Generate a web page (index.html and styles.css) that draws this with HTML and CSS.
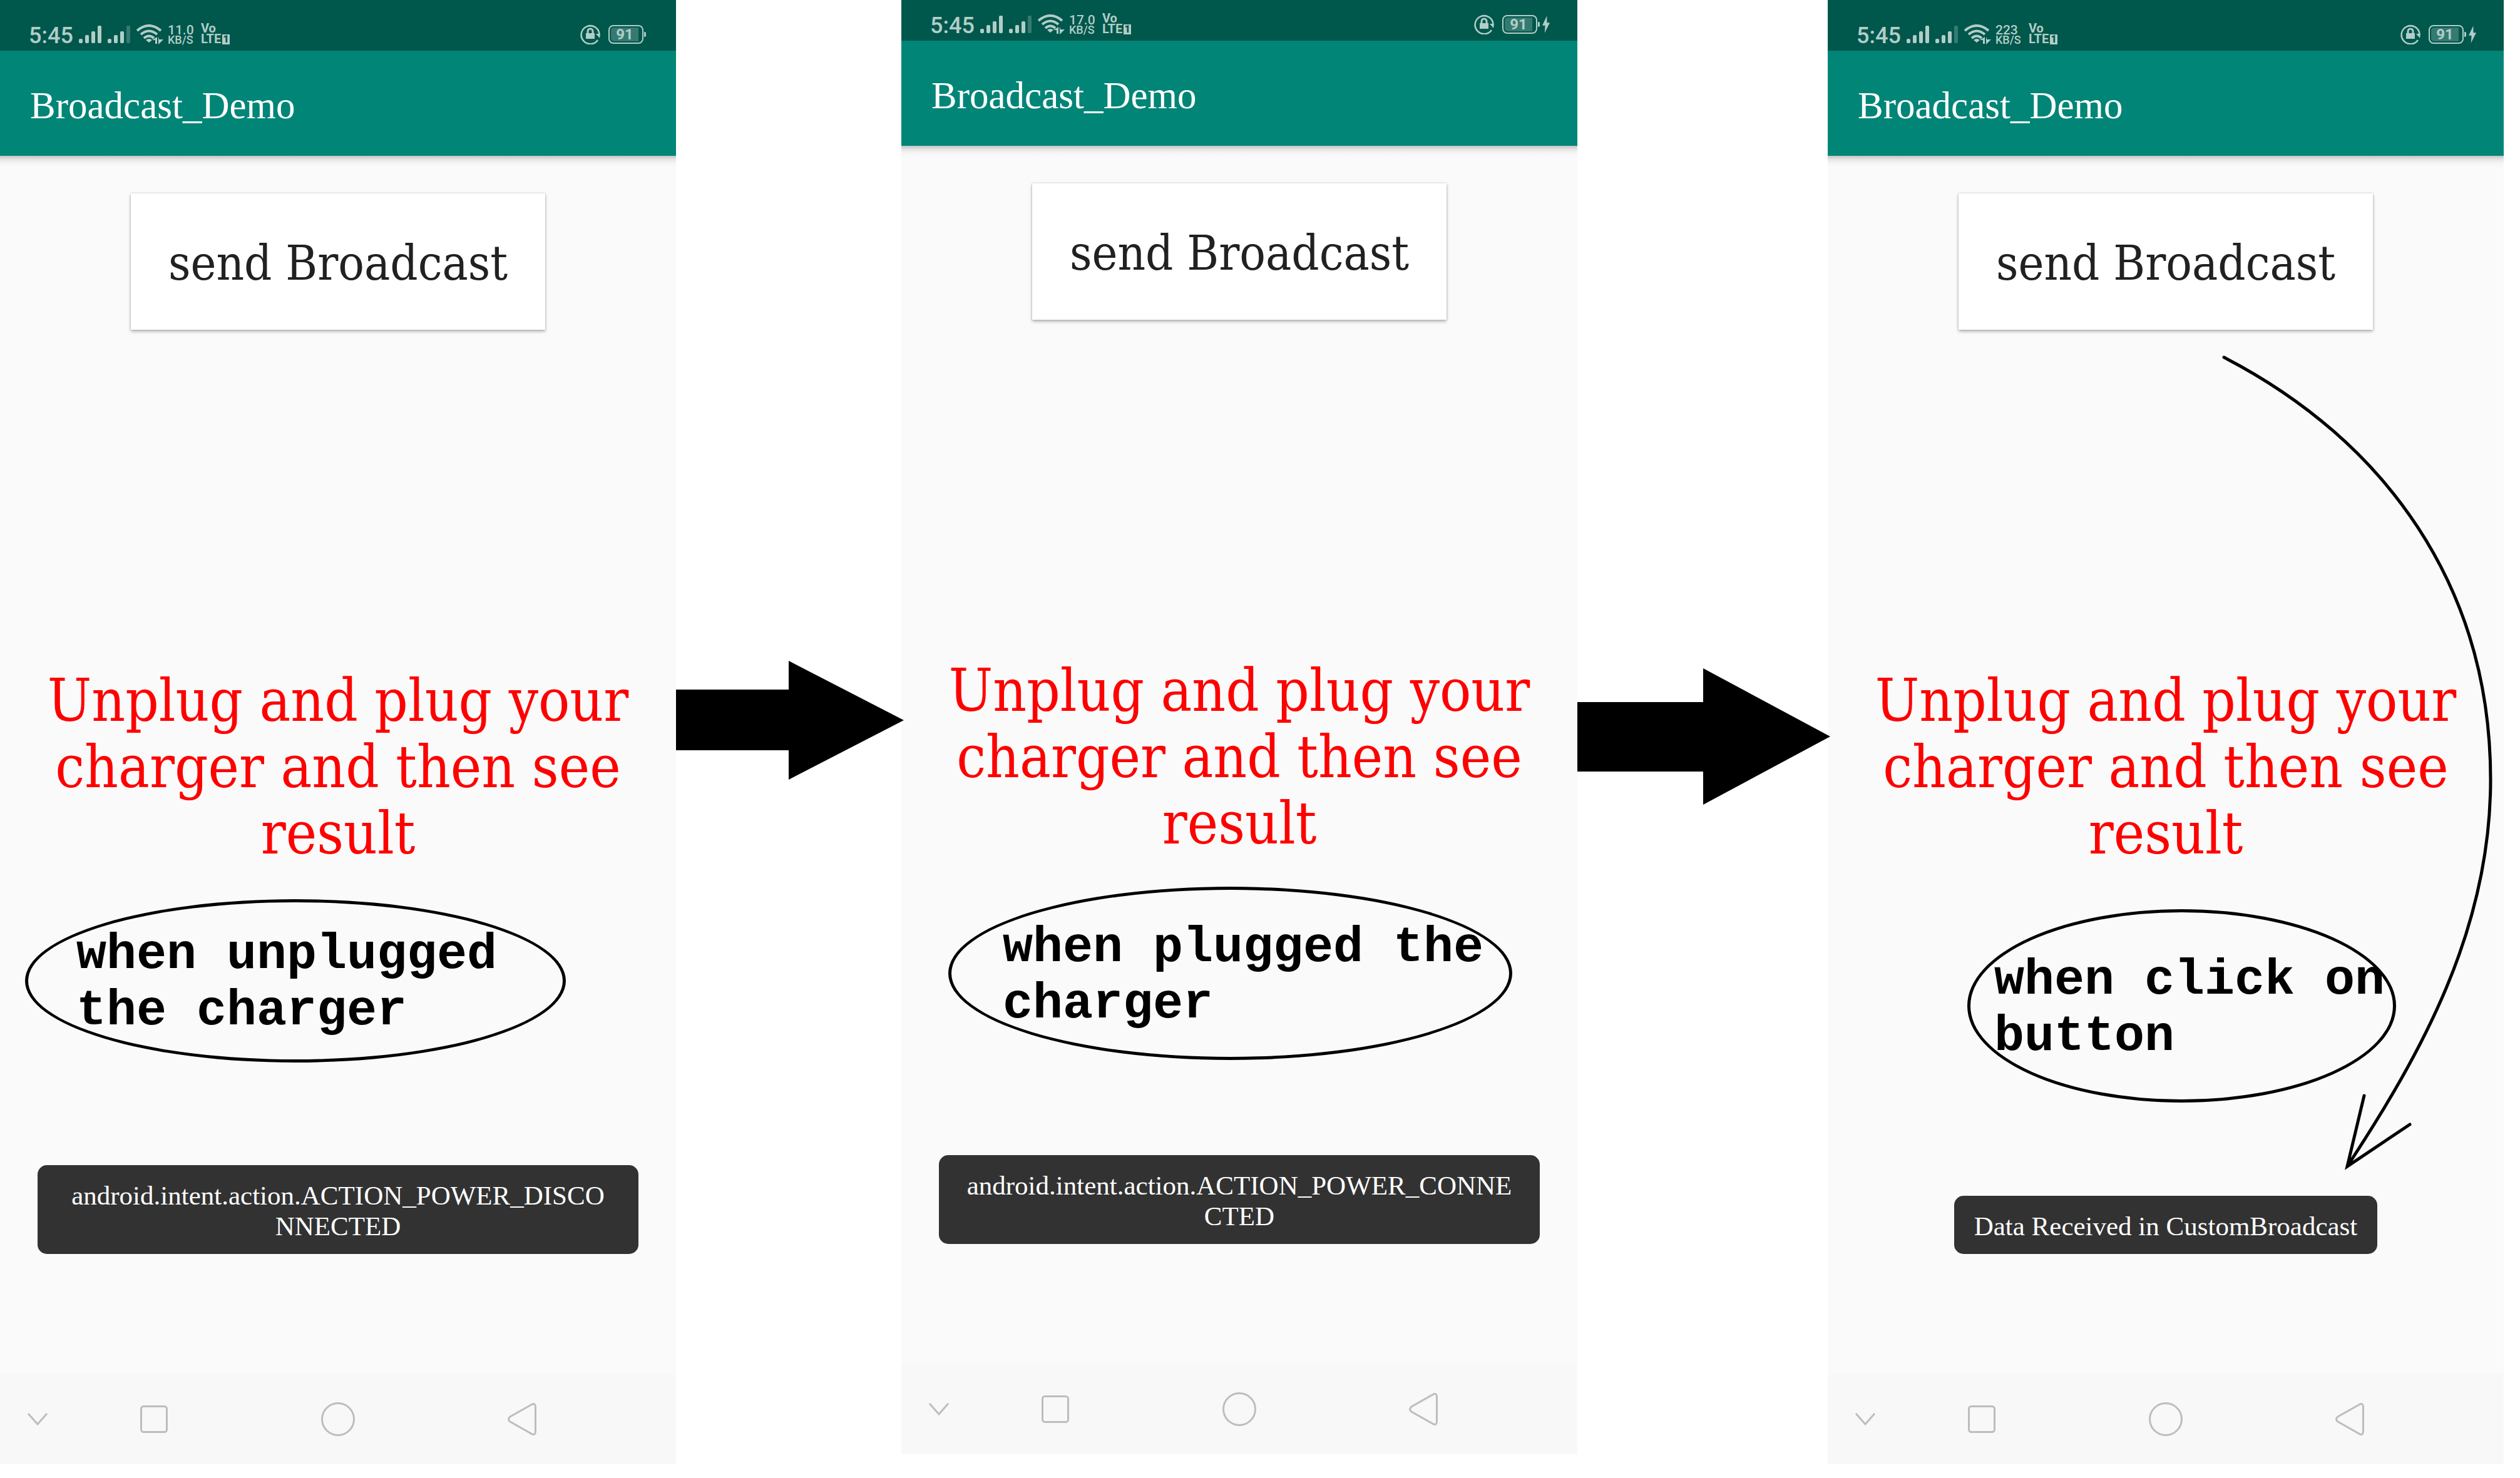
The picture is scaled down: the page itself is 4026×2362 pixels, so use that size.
FILE: index.html
```
<!DOCTYPE html>
<html lang="en">
<head>
<meta charset="utf-8">
<title>Broadcast_Demo</title>
<link rel="stylesheet" href="styles.css">
</head>
<body>
<svg class="sprite" aria-hidden="true">
  <symbol id="signal-full" viewBox="0 0 36 28"><rect y="21" width="6" height="7" rx="2"/><rect x="10" y="15" width="6" height="13" rx="2"/><rect x="20" y="9" width="6" height="19" rx="2"/><rect x="30" width="6" height="28" rx="2"/></symbol>
  <symbol id="signal-low" viewBox="0 0 36 28"><rect y="21" width="6" height="7" rx="2"/><rect x="10" y="15" width="6" height="13" rx="2"/><rect x="20" y="9" width="6" height="19" rx="2"/><rect x="30" width="6" height="28" rx="2" opacity=".3"/></symbol>
  <symbol id="wifi" viewBox="0 0 44 32"><g fill="none" stroke="currentColor" stroke-width="4"><path d="M1 10Q20-6 39 10"/><path d="M7 16Q20 5 33 16"/><path d="M12 22Q20 15 28 22"/></g><path d="M20 29l-5-4q5-4 10 0z"/><path d="M33 20v11h-3v-6h-5zM35 32V21h1v3h7z"/></symbol>
  <symbol id="rotate-lock" viewBox="0 0 32 32"><path d="M28 25A14.500 14.500 0 1 1 30.500 15" fill="none" stroke="currentColor" stroke-width="2.500"/><path d="M25 15h7l-1 7z"/><rect x="9" y="14" width="14" height="9"/><path d="M12 14v-3a4 4 0 0 1 8 0v3" fill="none" stroke="currentColor" stroke-width="3"/></symbol>
  <symbol id="bolt" viewBox="0 0 13 30"><path d="M8 0L0 17h5L4 30l9-18H8z"/></symbol>
  <symbol id="nav-down" viewBox="0 0 34 22"><path d="M2 2l15 17L32 2" fill="none" stroke="currentColor" stroke-width="3"/></symbol>
  <symbol id="nav-recent" viewBox="0 0 44 44"><rect x="1.500" y="1.500" width="41" height="41" rx="4" fill="none" stroke="currentColor" stroke-width="3"/></symbol>
  <symbol id="nav-home" viewBox="0 0 54 54"><circle cx="27" cy="27" r="25.500" fill="none" stroke="currentColor" stroke-width="3"/></symbol>
  <symbol id="nav-back" viewBox="0 0 46 52"><path d="M39 2.200L4 22Q-1 26 4 30L39 49.800Q44 52 44.500 46V6Q44 0 39 2.200z" fill="none" stroke="currentColor" stroke-width="3"/></symbol>
</svg>
<main class="flow">
  <section class="phone">
    <header class="status">
      <span class="clock">5:45</span>
      <svg class="signal"><use href="#signal-full"/></svg>
      <svg class="signal"><use href="#signal-low"/></svg>
      <svg class="wifi"><use href="#wifi"/></svg>
      <span class="rate"><span class="rate-num">11.0</span><span class="rate-unit">KB/S</span></span>
      <span class="volte"><span>Vo</span><span class="lte">LTE<b class="sim">1</b></span></span>
      <svg class="lock"><use href="#rotate-lock"/></svg>
      <span class="battery"><span class="level">91</span></span>
    </header>
    <h1 class="appbar">Broadcast_Demo</h1>
    <div class="content">
      <button class="send" type="button">send Broadcast</button>
      <p class="prompt">Unplug and plug your<br>charger and then see<br>result</p>
      <p class="toast">android.intent.action.ACTION_POWER_DISCO<br>NNECTED</p>
    </div>
    <nav class="navbar">
      <button class="nav" type="button" aria-label="Hide"><svg class="i-down"><use href="#nav-down"/></svg></button>
      <button class="nav" type="button" aria-label="Recent"><svg class="i-recent"><use href="#nav-recent"/></svg></button>
      <button class="nav" type="button" aria-label="Home"><svg class="i-home"><use href="#nav-home"/></svg></button>
      <button class="nav" type="button" aria-label="Back"><svg class="i-back"><use href="#nav-back"/></svg></button>
    </nav>
    <p class="note note-unplugged">when unplugged<br>the charger</p>
  </section>

  <svg class="step step-one" viewBox="0 0 360 190"><path d="M0 46H180V0L364 95L180 190V143H0z"/></svg>

  <section class="phone phone-short">
    <header class="status">
      <span class="clock">5:45</span>
      <svg class="signal"><use href="#signal-full"/></svg>
      <svg class="signal"><use href="#signal-low"/></svg>
      <svg class="wifi"><use href="#wifi"/></svg>
      <span class="rate"><span class="rate-num">17.0</span><span class="rate-unit">KB/S</span></span>
      <span class="volte"><span>Vo</span><span class="lte">LTE<b class="sim">1</b></span></span>
      <svg class="lock"><use href="#rotate-lock"/></svg>
      <span class="battery"><span class="level">91</span></span>
      <svg class="bolt"><use href="#bolt"/></svg>
    </header>
    <h1 class="appbar">Broadcast_Demo</h1>
    <div class="content">
      <button class="send" type="button">send Broadcast</button>
      <p class="prompt">Unplug and plug your<br>charger and then see<br>result</p>
      <p class="toast">android.intent.action.ACTION_POWER_CONNE<br>CTED</p>
    </div>
    <nav class="navbar">
      <button class="nav" type="button" aria-label="Hide"><svg class="i-down"><use href="#nav-down"/></svg></button>
      <button class="nav" type="button" aria-label="Recent"><svg class="i-recent"><use href="#nav-recent"/></svg></button>
      <button class="nav" type="button" aria-label="Home"><svg class="i-home"><use href="#nav-home"/></svg></button>
      <button class="nav" type="button" aria-label="Back"><svg class="i-back"><use href="#nav-back"/></svg></button>
    </nav>
    <p class="note note-plugged">when plugged the<br>charger</p>
  </section>

  <svg class="step step-two" viewBox="0 0 400 218"><path d="M0 54H201V0L404 109L201 218V165H0z"/></svg>

  <section class="phone">
    <header class="status">
      <span class="clock">5:45</span>
      <svg class="signal"><use href="#signal-full"/></svg>
      <svg class="signal"><use href="#signal-low"/></svg>
      <svg class="wifi"><use href="#wifi"/></svg>
      <span class="rate"><span class="rate-num">223</span><span class="rate-unit">KB/S</span></span>
      <span class="volte"><span>Vo</span><span class="lte">LTE<b class="sim">1</b></span></span>
      <svg class="lock"><use href="#rotate-lock"/></svg>
      <span class="battery"><span class="level">91</span></span>
      <svg class="bolt"><use href="#bolt"/></svg>
    </header>
    <h1 class="appbar">Broadcast_Demo</h1>
    <div class="content">
      <button class="send" type="button">send Broadcast</button>
      <p class="prompt">Unplug and plug your<br>charger and then see<br>result</p>
      <p class="toast">Data Received in CustomBroadcast</p>
    </div>
    <nav class="navbar">
      <button class="nav" type="button" aria-label="Hide"><svg class="i-down"><use href="#nav-down"/></svg></button>
      <button class="nav" type="button" aria-label="Recent"><svg class="i-recent"><use href="#nav-recent"/></svg></button>
      <button class="nav" type="button" aria-label="Home"><svg class="i-home"><use href="#nav-home"/></svg></button>
      <button class="nav" type="button" aria-label="Back"><svg class="i-back"><use href="#nav-back"/></svg></button>
    </nav>
    <p class="note note-click">when click on<br>button</p>
    <svg class="curve" viewBox="0 0 1080 2340"><path d="M633 571C890 704 1059 936 1059 1246C1059 1486 948 1684 830 1864M857 1751L830 1864L930 1797"/></svg>
  </section>
</main>
</body>
</html>
```
FILE: styles.css
```
* { box-sizing: border-box; }
body { margin: 0; background: #fff; }
h1, p { margin: 0; font-weight: 400; }
button { border: 0; padding: 0; margin: 0; }
svg { fill: currentColor; display: block; flex: none; }
.sprite { position: absolute; width: 0; height: 0; }

.flow {
  display: grid;
  grid-template-columns: 1080fr 360fr 1080fr 400fr 1080fr;
  align-items: start;
  padding-right: 26px;
}
.phone { position: relative; min-width: 0; background: #fafafa; }

.status {
  display: flex;
  align-items: flex-end;
  height: 81px;
  padding: 0 52px 10px 46px;
  background: #00574b;
  color: #b2cdc9;
  font-family: Roboto, sans-serif;
}
.phone-short .status { height: 65px; }
.clock { width: 80px; font-size: 36px; line-height: 28px; font-weight: 500; }
.signal { width: 36px; height: 28px; margin: 0 10px 2px 0; }
.wifi { width: 44px; height: 32px; margin-right: 6px; }
.rate { width: 53px; display: flex; flex-direction: column; font-weight: 500; }
.rate-num { font-size: 21px; line-height: 17px; }
.rate-unit { font-size: 18px; line-height: 14px; }
.volte { display: flex; flex-direction: column; font-size: 20px; line-height: 17px; font-weight: 700; }
.lte { display: flex; align-items: center; gap: 2px; }
.sim { width: 12px; height: 16px; background: #b2cdc9; color: #00574b; font-size: 16px; line-height: 16px; text-align: center; }
.lock { width: 32px; height: 32px; margin: 0 13px 0 auto; }
.battery {
  position: relative;
  width: 56px;
  height: 30px;
  margin-bottom: 1px;
  padding: 2px;
  border: 2px solid #b2cdc9;
  border-radius: 8px;
}
.battery::after {
  content: "";
  position: absolute;
  right: -6px;
  top: 9px;
  width: 3px;
  height: 8px;
  border-radius: 0 2px 2px 0;
  background: #b2cdc9;
}
.level {
  display: block;
  width: 44px;
  height: 22px;
  border-radius: 5px 0 0 5px;
  background: #357a70;
  font-size: 24px;
  line-height: 22px;
  font-weight: 700;
  text-align: center;
}
.bolt { width: 12px; height: 30px; margin: 0 0 1px 8px; }
.status:has(.bolt) { padding-right: 44px; }

.appbar {
  padding: 55px 48px 47px;
  background: #008577;
  color: #fff;
  font: 61px/66px "Liberation Serif", serif;
}
.content {
  display: flex;
  flex-direction: column;
  align-items: center;
  min-height: 1947px;
  padding: 60px 0 192px;
  background: linear-gradient(#c4c4c4, #e6e6e6 6px, #f6f6f6 12px, #fafafa 18px);
}
.send {
  width: 662px;
  height: 218px;
  padding-top: 5px;
  background: #fff;
  box-shadow: 0 3px 5px rgba(0, 0, 0, .26), 0 0 3px rgba(0, 0, 0, .2);
  color: #212121;
  font: 77px/88px "DejaVu Serif Condensed", "Liberation Serif", serif;
}
.prompt {
  margin-top: 540px;
  color: #f00;
  font: 93px/106px "DejaVu Serif Condensed", "Liberation Serif", serif;
  text-align: center;
  white-space: nowrap;
}
.toast {
  margin-top: auto;
  padding: 24px 32px 20px;
  border-radius: 15px;
  background: #323232;
  color: #fff;
  font: 43px/49px "Liberation Serif", serif;
  text-align: center;
  white-space: nowrap;
}
.toast:has(br) { width: calc(100% - 120px); }

.navbar {
  display: grid;
  grid-template-columns: 120fr 252fr 336fr 252fr 120fr;
  height: 144px;
  background: #f8f8f8;
}
.nav { display: flex; align-items: center; justify-content: center; background: none; color: #bdbdbd; }
.i-down { width: 34px; height: 22px; }
.i-recent { width: 44px; height: 44px; }
.i-home { width: 54px; height: 54px; }
.i-back { width: 46px; height: 52px; }

/* Hand-drawn annotations on top of the screens */
.note {
  position: absolute;
  border: 5px solid #000;
  border-radius: 50%;
  color: #000;
  font: 700 80px/90px "Liberation Mono", monospace;
  white-space: nowrap;
}
.note-unplugged { left: 40px; top: 1437px; width: 864px; height: 261px; padding: 39px 0 0 77px; }
.note-plugged { left: 75px; top: 1417px; width: 901px; height: 277px; padding: 48px 0 0 82px; }
.note-click { left: 223px; top: 1453px; width: 685px; height: 309px; padding: 64px 0 0 38px; }
.curve {
  position: absolute;
  inset: 0;
  width: 100%;
  fill: none;
  stroke: #000;
  stroke-width: 5;
  stroke-linecap: round;
  pointer-events: none;
}
.step { position: relative; z-index: 1; width: 100%; overflow: visible; color: #000; }
.step-one { margin-top: 1056px; }
.step-two { margin-top: 1068px; }
```
